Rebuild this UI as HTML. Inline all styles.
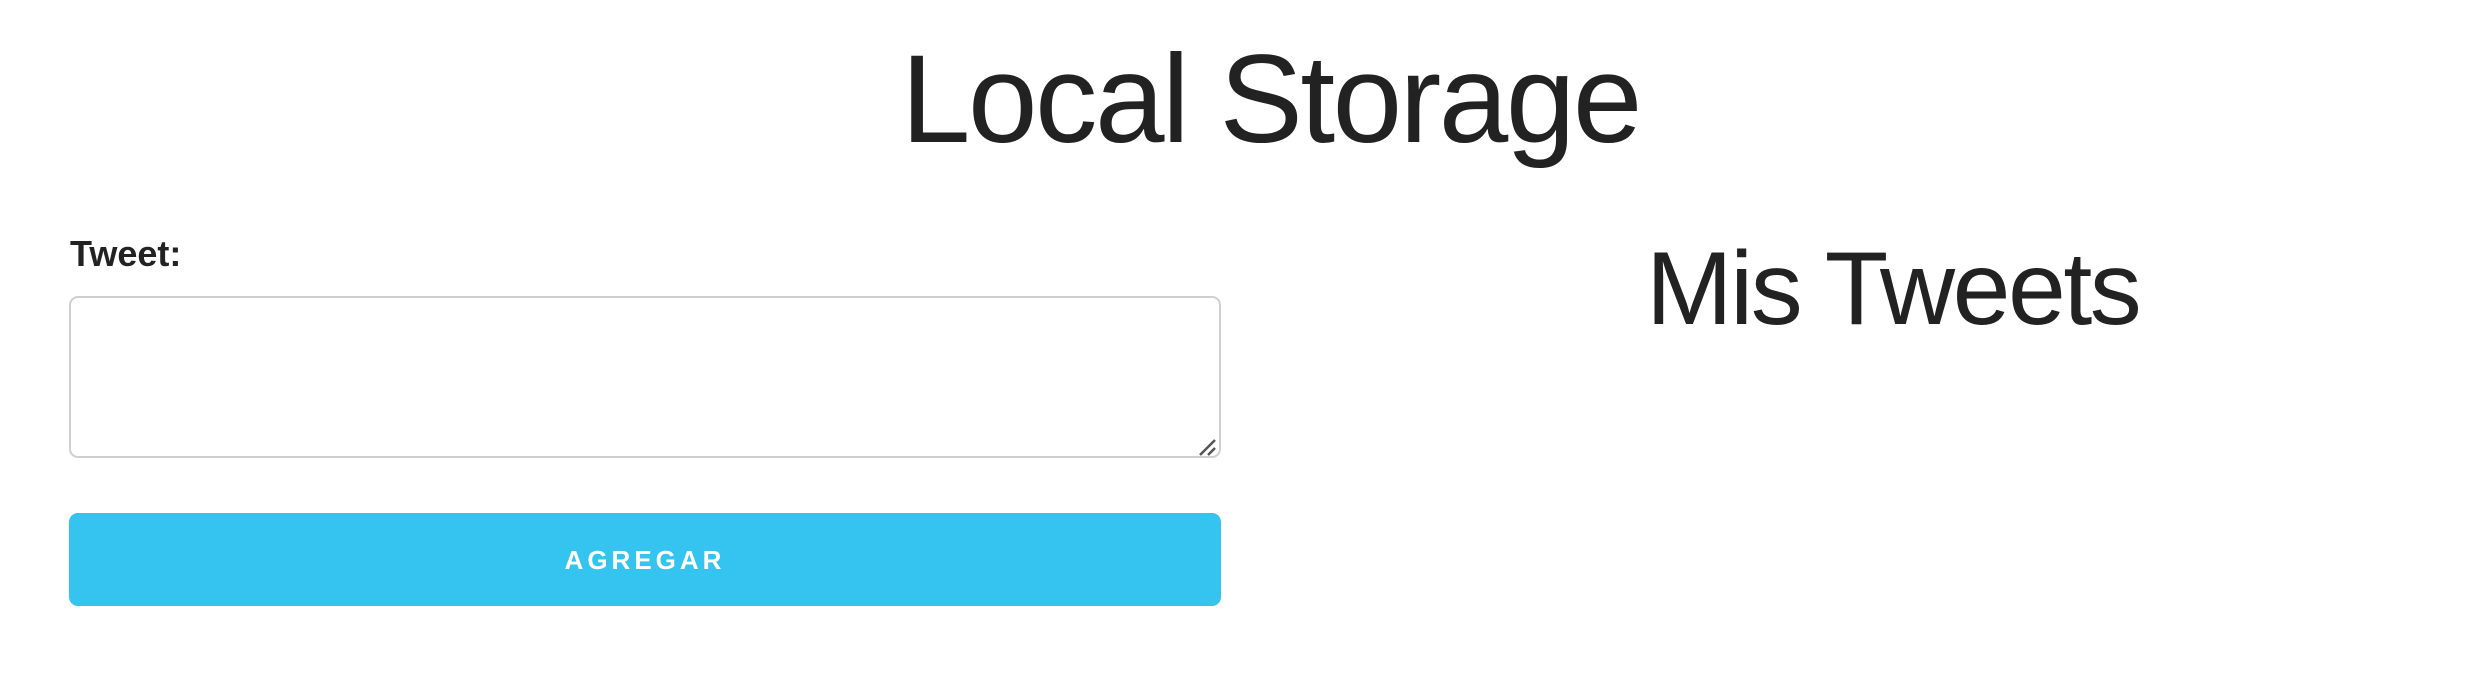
<!DOCTYPE html>
<html><head><meta charset="utf-8"><style>
html,body{margin:0;padding:0;background:#fff;width:2480px;height:677px;overflow:hidden;font-family:"Liberation Sans",Arial,sans-serif;color:#222;}
.t{position:absolute;white-space:nowrap;line-height:1;}
#h1{left:901px;top:37px;font-size:125px;letter-spacing:-2.5px;}
#h2{left:1646px;top:237px;font-size:104px;letter-spacing:-2.5px;}
#lbl{left:70px;top:236px;font-size:36px;font-weight:bold;}
#ta{position:absolute;left:69px;top:296px;width:1148px;height:158px;border:2px solid #cfcfcf;border-radius:9px;background:#fff;}
#btn{position:absolute;left:69px;top:513px;width:1152px;height:93px;background:#35c3ef;border-radius:9px;color:#fff;font-weight:bold;font-size:26px;letter-spacing:4px;text-align:center;line-height:95px;}
</style></head><body>
<div class="t" id="h1">Local Storage</div>
<div class="t" id="h2">Mis Tweets</div>
<div class="t" id="lbl">Tweet:</div>
<div id="ta"></div>
<svg style="position:absolute;left:0;top:0" width="2480" height="677"><g stroke="#555" stroke-width="2.5"><line x1="1200" y1="455" x2="1215" y2="440"/><line x1="1208" y1="455" x2="1215" y2="448"/></g></svg>
<div id="btn">AGREGAR</div>
</body></html>
